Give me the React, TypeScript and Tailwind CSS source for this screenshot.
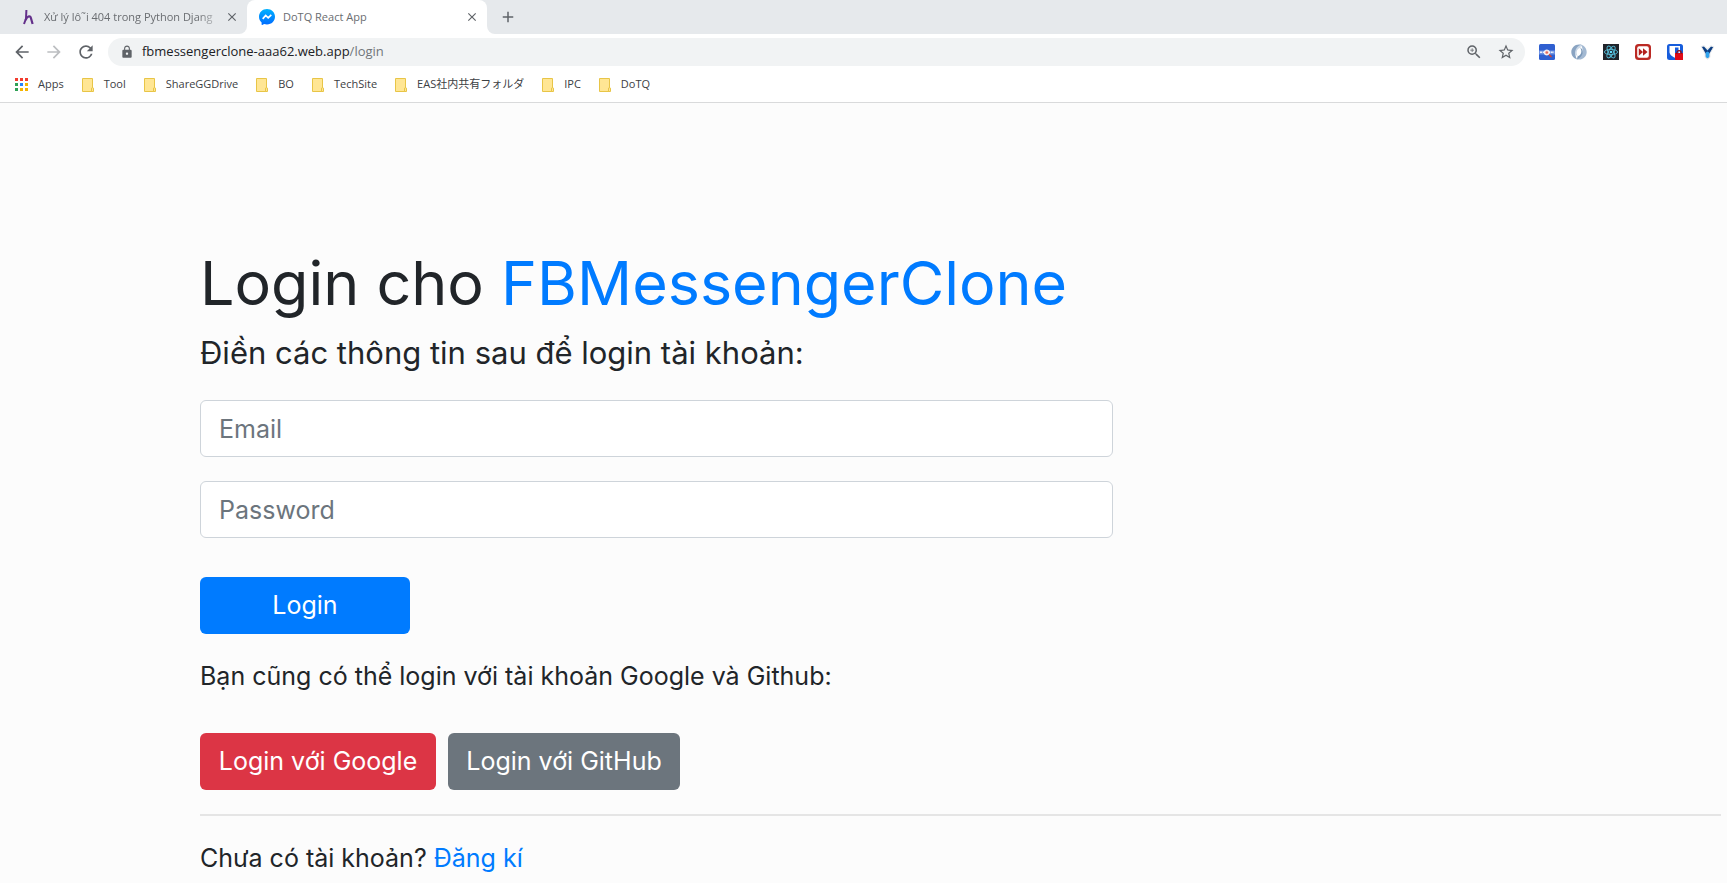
import { useState } from 'react';
import {
  MdArrowBack,
  MdArrowForward,
  MdRefresh,
  MdLock,
  MdZoomIn,
  MdStarBorder,
  MdClose,
  MdAdd,
} from 'react-icons/md';

const bookmarks = ['Tool', 'ShareGGDrive', 'BO', 'TechSite', 'EAS社内共有フォルダ', 'IPC', 'DoTQ'];

function BlogIcon() {
  return (
    <svg viewBox="0 0 16 16" className="size-4 shrink-0" fill="none" stroke="#64308a" strokeLinejoin="round">
      <path d="M6.400 1 L6 9.500 L4 15" strokeWidth="2" />
      <path d="M5.600 11 C7 7.500 10 6 10.900 9 L12.600 15" strokeWidth="2.200" />
    </svg>
  );
}

function MessengerIcon() {
  return (
    <svg viewBox="0 0 16 16" className="size-4 shrink-0">
      <defs>
        <linearGradient id="messenger" x1="0" y1="0" x2="0" y2="1">
          <stop offset="0" stopColor="#00b2ff" />
          <stop offset="1" stopColor="#006aff" />
        </linearGradient>
      </defs>
      <path
        fill="url(#messenger)"
        d="M8 0C3.500 0 0 3.300 0 7.700c0 2.400 1 4.300 2.600 5.700v2.200c0 .4.4.5.7.3l1.800-1c.9.3 1.900.5 2.900.5 4.500 0 8-3.300 8-7.700S12.500 0 8 0z"
      />
      <path d="M3.700 9.900 6.700 6.500 9.200 8.900 12.300 5.900" fill="none" stroke="#fff" strokeWidth="1.700" />
    </svg>
  );
}

function AppsIcon() {
  const colors = ['#f23c2e', '#f23c2e', '#f23c2e', '#2fa156', '#2684fc', '#f5b400', '#2fa156', '#f5b400', '#f5b400'];
  return (
    <svg viewBox="0 0 13 13" className="size-[13px] shrink-0" shapeRendering="crispEdges">
      {colors.map((color, i) => (
        <rect key={i} x={(i % 3) * 5} y={Math.floor(i / 3) * 5} width="3" height="3" fill={color} />
      ))}
    </svg>
  );
}

function FolderIcon() {
  return (
    <svg viewBox="0 0 12 14" className="h-[14px] w-3 shrink-0" fill="#ffe694" stroke="#e8c547">
      <path d="M.5 .5H10.500V13.500H.5z" />
      <path d="M9.500 13.500V11Q9.500 9.500 10.500 9.500T11.500 11V13.500z" />
    </svg>
  );
}

function Extensions() {
  return (
    <div className="ml-0.5 flex shrink-0 items-center gap-4">
      <button aria-label="Network inspector">
        <svg viewBox="0 0 16 16" className="size-4">
          <rect width="16" height="16" rx="1.500" fill="#2f5fd0" />
          <path d="M0 6.500h16v4H0z" fill="#6e92e2" />
          <path d="M1 8.300h14" stroke="#e8eefc" strokeWidth="1.600" strokeDasharray="2 .7" />
          <circle cx="7.800" cy="8.500" r="2.600" fill="#f6dcd8" stroke="#fff" strokeWidth=".8" />
          <circle cx="7.800" cy="8.500" r="1.300" fill="#e56a5c" />
          <path d="m10 10.500 2.500 2.500" stroke="#d8442f" strokeWidth="1.500" />
        </svg>
      </button>
      <button aria-label="JSON viewer">
        <svg viewBox="0 0 16 16" className="size-4">
          <path d="M10.500.8C5-.8.300 3.200.300 8c0 3.600 2.500 6.700 6.200 7.500C3.200 12 3.400 4.500 10.500.8z" fill="#8aa4c2" />
          <path d="M5.500 15.200C11 16.800 15.700 12.800 15.700 8c0-3.600-2.500-6.700-6.200-7.500C12.800 4 12.600 11.500 5.500 15.200z" fill="#a3b9d2" />
          <path d="M10 .800C3.500 3 2.500 10.500 7 12.500 4.500 9 5.500 5 9.500 3.500z" fill="#c9d7e6" />
          <path d="M6 15.200c6.500-2.200 7.500-9.700 3-11.700 2.500 3.500 1.500 7.500-2.500 9z" fill="#7b98b8" />
        </svg>
      </button>
      <button aria-label="React developer tools">
        <svg viewBox="0 0 16 16" className="size-4" fill="none" stroke="#55bcd9">
          <path d="M0 0h16v16H0z" fill="#20232a" stroke="none" />
          <circle cx="8" cy="8" r="1.300" fill="#61dafb" stroke="none" />
          <ellipse cx="8" cy="8" rx="6.600" ry="2.600" strokeWidth=".9" />
          <ellipse cx="8" cy="8" rx="6.600" ry="2.600" strokeWidth=".9" transform="rotate(60 8 8)" />
          <ellipse cx="8" cy="8" rx="6.600" ry="2.600" strokeWidth=".9" transform="rotate(120 8 8)" />
        </svg>
      </button>
      <button aria-label="Video speed controller">
        <svg viewBox="0 0 16 16" className="size-4">
          <rect width="16" height="16" rx="3.500" fill="#bb2a24" />
          <rect x="2.200" y="2.200" width="11.600" height="11.600" rx="2" fill="#fff" />
          <path d="M3.800 4.200 8 8l-4.200 3.800zM8 4.200 12.600 8 8 11.800z" fill="#b3201c" />
        </svg>
      </button>
      <button aria-label="Password manager, locked">
        <svg viewBox="0 0 16 16" className="size-4">
          <rect width="16" height="16" rx="2.500" fill="#175ddc" />
          <path d="M2.500 2h10.500v6c0 2.700-2.700 4.500-5.200 5.700-2.500-1.200-5.300-3-5.300-5.700z" fill="#fff" />
          <path d="M8 3.500h3.500v4.800c0 1.500-1.700 3-3.500 4z" fill="#175ddc" />
          <path d="M8 9h8v7H8z" fill="#e00b18" />
          <path d="M9.800 10V8.900a2.200 2.200 0 0 1 4.400 0V10" fill="none" stroke="#8d0d14" strokeWidth="1.200" />
        </svg>
      </button>
      <button aria-label="Vimium">
        <svg viewBox="0 0 16 16" className="size-4">
          <path
            d="M2.500 2.500 5 2 8.500 5.500 12 2 14.500 3 10.800 9.500V13L8.500 15 6.200 13V9.500z"
            fill="#1565b5"
            stroke="#e3e5e8"
            strokeWidth="1.200"
          />
          <path d="M3 3 5 2.800 8.500 7 12 2.800 14 3.200 10.300 9.500H6.800z" fill="#0f3d80" />
          <path d="M6.800 8.500 8.500 7.500l1.700 1v4.300l-1.700 1.500-1.700-1.500z" fill="#2ea3ee" />
        </svg>
      </button>
    </div>
  );
}

function BrowserChrome() {
  return (
    <header className="shrink-0 border-b border-[#d9dadb] bg-white font-['Open_Sans','Noto_Sans_CJK_JP',sans-serif] text-[#3c4043]">
      <nav aria-label="Tabs" className="flex h-[34px] bg-white text-[11px] text-[#6a6d71]">
        <div className="flex w-[247px] shrink-0 items-center rounded-br-lg bg-[#e6e9ec] pr-2 pl-5">
          <BlogIcon />
          <a
            href="#blog"
            className="ml-2 flex-1 whitespace-nowrap [mask-image:linear-gradient(to_right,black_85%,transparent)]"
          >
            Xử lý lô˜i 404 trong Python Djang
          </a>
          <button aria-label="Close tab" className="text-[#5f6368]">
            <MdClose className="size-3.5" />
          </button>
        </div>
        <div className="flex w-60 shrink-0 bg-[#e6e9ec] bg-[linear-gradient(white,white)] bg-bottom bg-no-repeat [background-size:100%_50%]">
          <div className="flex flex-1 items-center rounded-t-lg bg-white pr-2 pl-3">
            <MessengerIcon />
            <a href="#app" className="ml-2 flex-1">
              DoTQ React App
            </a>
            <button aria-label="Close tab" className="text-[#5f6368]">
              <MdClose className="size-3.5" />
            </button>
          </div>
        </div>
        <div className="flex flex-1 items-center rounded-bl-lg bg-[#e6e9ec] pl-3">
          <button aria-label="New tab" className="text-[#5f6368]">
            <MdAdd className="size-[18px]" />
          </button>
        </div>
      </nav>

      <div className="flex h-9 items-center gap-3 px-3">
        <div className="flex shrink-0 gap-3 text-[#5f6368]">
          <button aria-label="Back">
            <MdArrowBack className="size-5" />
          </button>
          <button aria-label="Forward" className="text-[#bcbec1]">
            <MdArrowForward className="size-5" />
          </button>
          <button aria-label="Reload">
            <MdRefresh className="size-5" />
          </button>
        </div>
        <div className="flex h-7 min-w-0 flex-1 items-center rounded-full bg-[#f1f3f4] pr-2.5 pl-3">
          <MdLock className="size-3.5 shrink-0 text-[#5f6368]" />
          <span className="ml-2 flex-1 text-[13px] text-[#202124]">
            fbmessengerclone-aaa62.web.app<span className="text-[#70757a]">/login</span>
          </span>
          <span className="flex gap-3.5 text-[#5f6368]">
            <button aria-label="Zoom">
              <MdZoomIn className="size-[18px]" />
            </button>
            <button aria-label="Bookmark this page">
              <MdStarBorder className="size-[18px]" />
            </button>
          </span>
        </div>
        <Extensions />
      </div>

      <nav aria-label="Bookmarks" className="flex h-8 items-center gap-[18px] pb-[3px] pl-[15px] text-[11px] whitespace-nowrap">
        <a href="#apps" className="flex items-center gap-2.5">
          <AppsIcon />
          Apps
        </a>
        {bookmarks.map((name) => (
          <a key={name} href={`#${name}`} className="flex items-center gap-2.5">
            <FolderIcon />
            {name}
          </a>
        ))}
      </nav>
    </header>
  );
}

function Field({ label, type, value, onChange }: { label: string; type: string; value: string; onChange: (v: string) => void }) {
  return (
    <input
      type={type}
      aria-label={label}
      placeholder={label}
      value={value}
      onChange={(e) => onChange(e.target.value)}
      className="h-[57px] w-3/5 rounded-md border border-[#ced4da] bg-white px-[18px] text-[25px] outline-none placeholder:text-[#6c757d] focus:border-[#80bdff]"
    />
  );
}

export default function App() {
  const [email, setEmail] = useState('');
  const [password, setPassword] = useState('');

  return (
    <div className="flex min-h-screen flex-col bg-[#fcfcfc]">
      <BrowserChrome />
      <main className="flex-1 pt-36 pr-1.5 pl-[200px] font-['Inter',sans-serif] text-[25px] text-[#212529]">
        <h1 className="text-[61px] leading-[72px]">
          Login cho <span className="text-[#007bff]">FBMessengerClone</span>
        </h1>
        <h2 className="mt-4 text-[31px] leading-9">Điền các thông tin sau để login tài khoản:</h2>
        <form className="mt-[29px] flex flex-col items-start gap-6" onSubmit={(e) => e.preventDefault()}>
          <Field label="Email" type="email" value={email} onChange={setEmail} />
          <Field label="Password" type="password" value={password} onChange={setPassword} />
          <button className="mt-[15px] h-[57px] w-[210px] rounded-md bg-[#007bff] text-white">Login</button>
        </form>
        <p className="mt-6 leading-9">Bạn cũng có thể login với tài khoản Google và Github:</p>
        <div className="mt-[39px] flex gap-3 text-white">
          <button className="h-[57px] w-[236px] rounded-md bg-[#dc3545]">Login với Google</button>
          <button className="h-[57px] w-[232px] rounded-md bg-[#6c757d]">Login với GitHub</button>
        </div>
        <hr className="mt-6 border-t-2 border-[#e5e5e5]" />
        <p className="mt-6 leading-9">
          Chưa có tài khoản?{' '}
          <a href="#signup" className="text-[#007bff]">
            Đăng kí
          </a>
        </p>
      </main>
    </div>
  );
}
